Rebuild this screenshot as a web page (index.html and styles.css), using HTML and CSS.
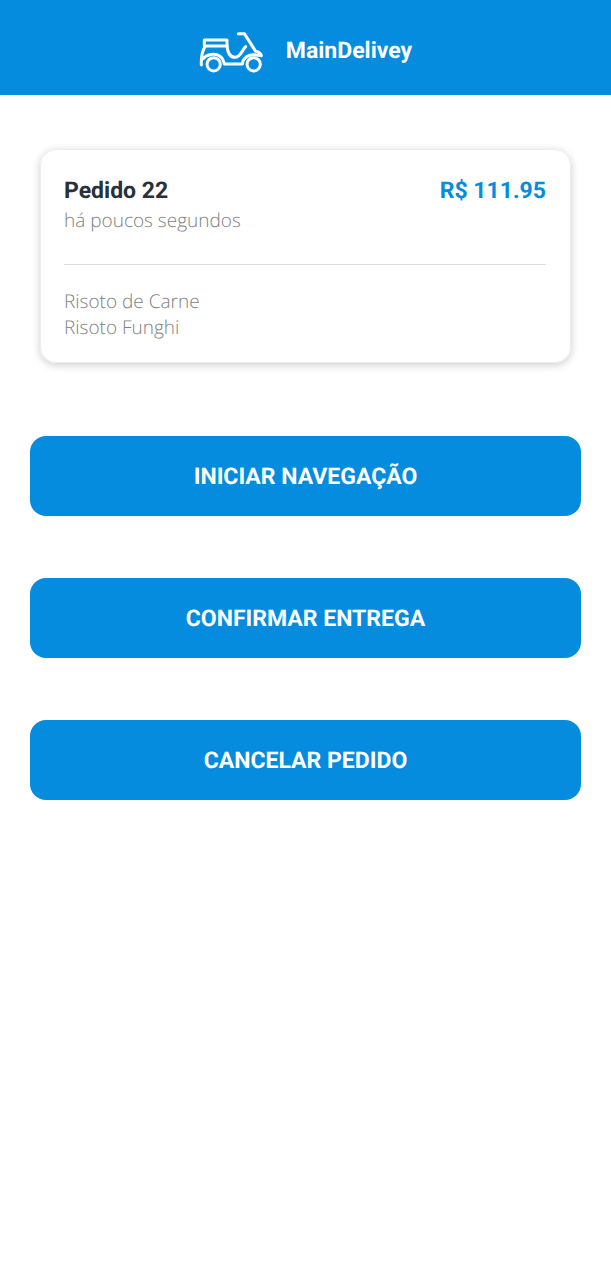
FILE: index.html
```html
<!DOCTYPE html>
<html lang="pt-BR">
<head>
<meta charset="utf-8">
<meta name="viewport" content="width=device-width, initial-scale=1">
<title>MainDelivey</title>
<link rel="stylesheet" href="styles.css">
</head>
<body>
<header class="header">
  <svg class="logo" viewBox="24 27 192 132" fill="none" stroke="currentColor" stroke-width="9" stroke-linejoin="round" stroke-linecap="round" aria-hidden="true">
    <circle cx="68" cy="133" r="20"/>
    <circle cx="188" cy="133" r="20"/>
    <path d="M40 60H108V78H40Z"/>
    <path d="M42 80C33 94 30 112 31 135M36 116C48 102 72 99 86 108C95 114 98 122 100 132H154C156 112 174 103 190 104L211 107C209 99 203 96 194 94L160 41H142"/>
    <path d="M108 78C110 98 118 112 132 112C148 112 153 91 164 80"/>
  </svg>
  <h1 class="brand">MainDelivey</h1>
</header>
<main class="content">
  <section class="card">
    <div class="summary">
      <h2 class="order">Pedido 22</h2>
      <strong class="price">R$ 111.95</strong>
    </div>
    <p class="time">há poucos segundos</p>
    <ul class="items">
      <li>Risoto de Carne</li>
      <li>Risoto Funghi</li>
    </ul>
  </section>
  <div class="actions">
    <button class="action" type="button">INICIAR NAVEGAÇÃO</button>
    <button class="action" type="button">CONFIRMAR ENTREGA</button>
    <button class="action" type="button">CANCELAR PEDIDO</button>
  </div>
</main>
</body>
</html>
```
FILE: styles.css
```css
* { box-sizing: border-box; }
body { margin: 0; background: #fff; font-family: "Open Sans", sans-serif; text-rendering: geometricPrecision; }
.header { display: flex; align-items: center; justify-content: center; gap: 23px; padding: 25px 0 18px; background: #058cdf; color: #fff; }
.logo { width: 64px; height: 52px; }
.brand { margin: 0; font: 700 23px/32px Roboto, sans-serif; }
.content { padding: 54px 30px; }
.card { margin: 0 10px; padding: 25px 24px 22px 23px; border: 1px solid #ececec; border-radius: 16px; box-shadow: 0 2px 8px rgba(0, 0, 0, 0.2); }
.summary { display: flex; justify-content: space-between; font: 700 23px/32px Roboto, sans-serif; }
.order { margin: 0; font: inherit; color: #263238; }
.price { font-weight: inherit; color: #058cdf; }
.time { margin: 0; padding-bottom: 31px; border-bottom: 1px solid #ddd; }
.time, .items { font-size: 19px; line-height: 26px; font-weight: 300; color: #808080; }
.items { margin: 0; padding: 23px 0 0; list-style: none; }
.actions { display: grid; gap: 62px; margin-top: 73px; }
.action { height: 80px; padding: 2px 0 0; border: 0; border-radius: 16px; background: #058cdf; color: #fff; font: 700 23px/32px Roboto, sans-serif; text-rendering: inherit; }
```
